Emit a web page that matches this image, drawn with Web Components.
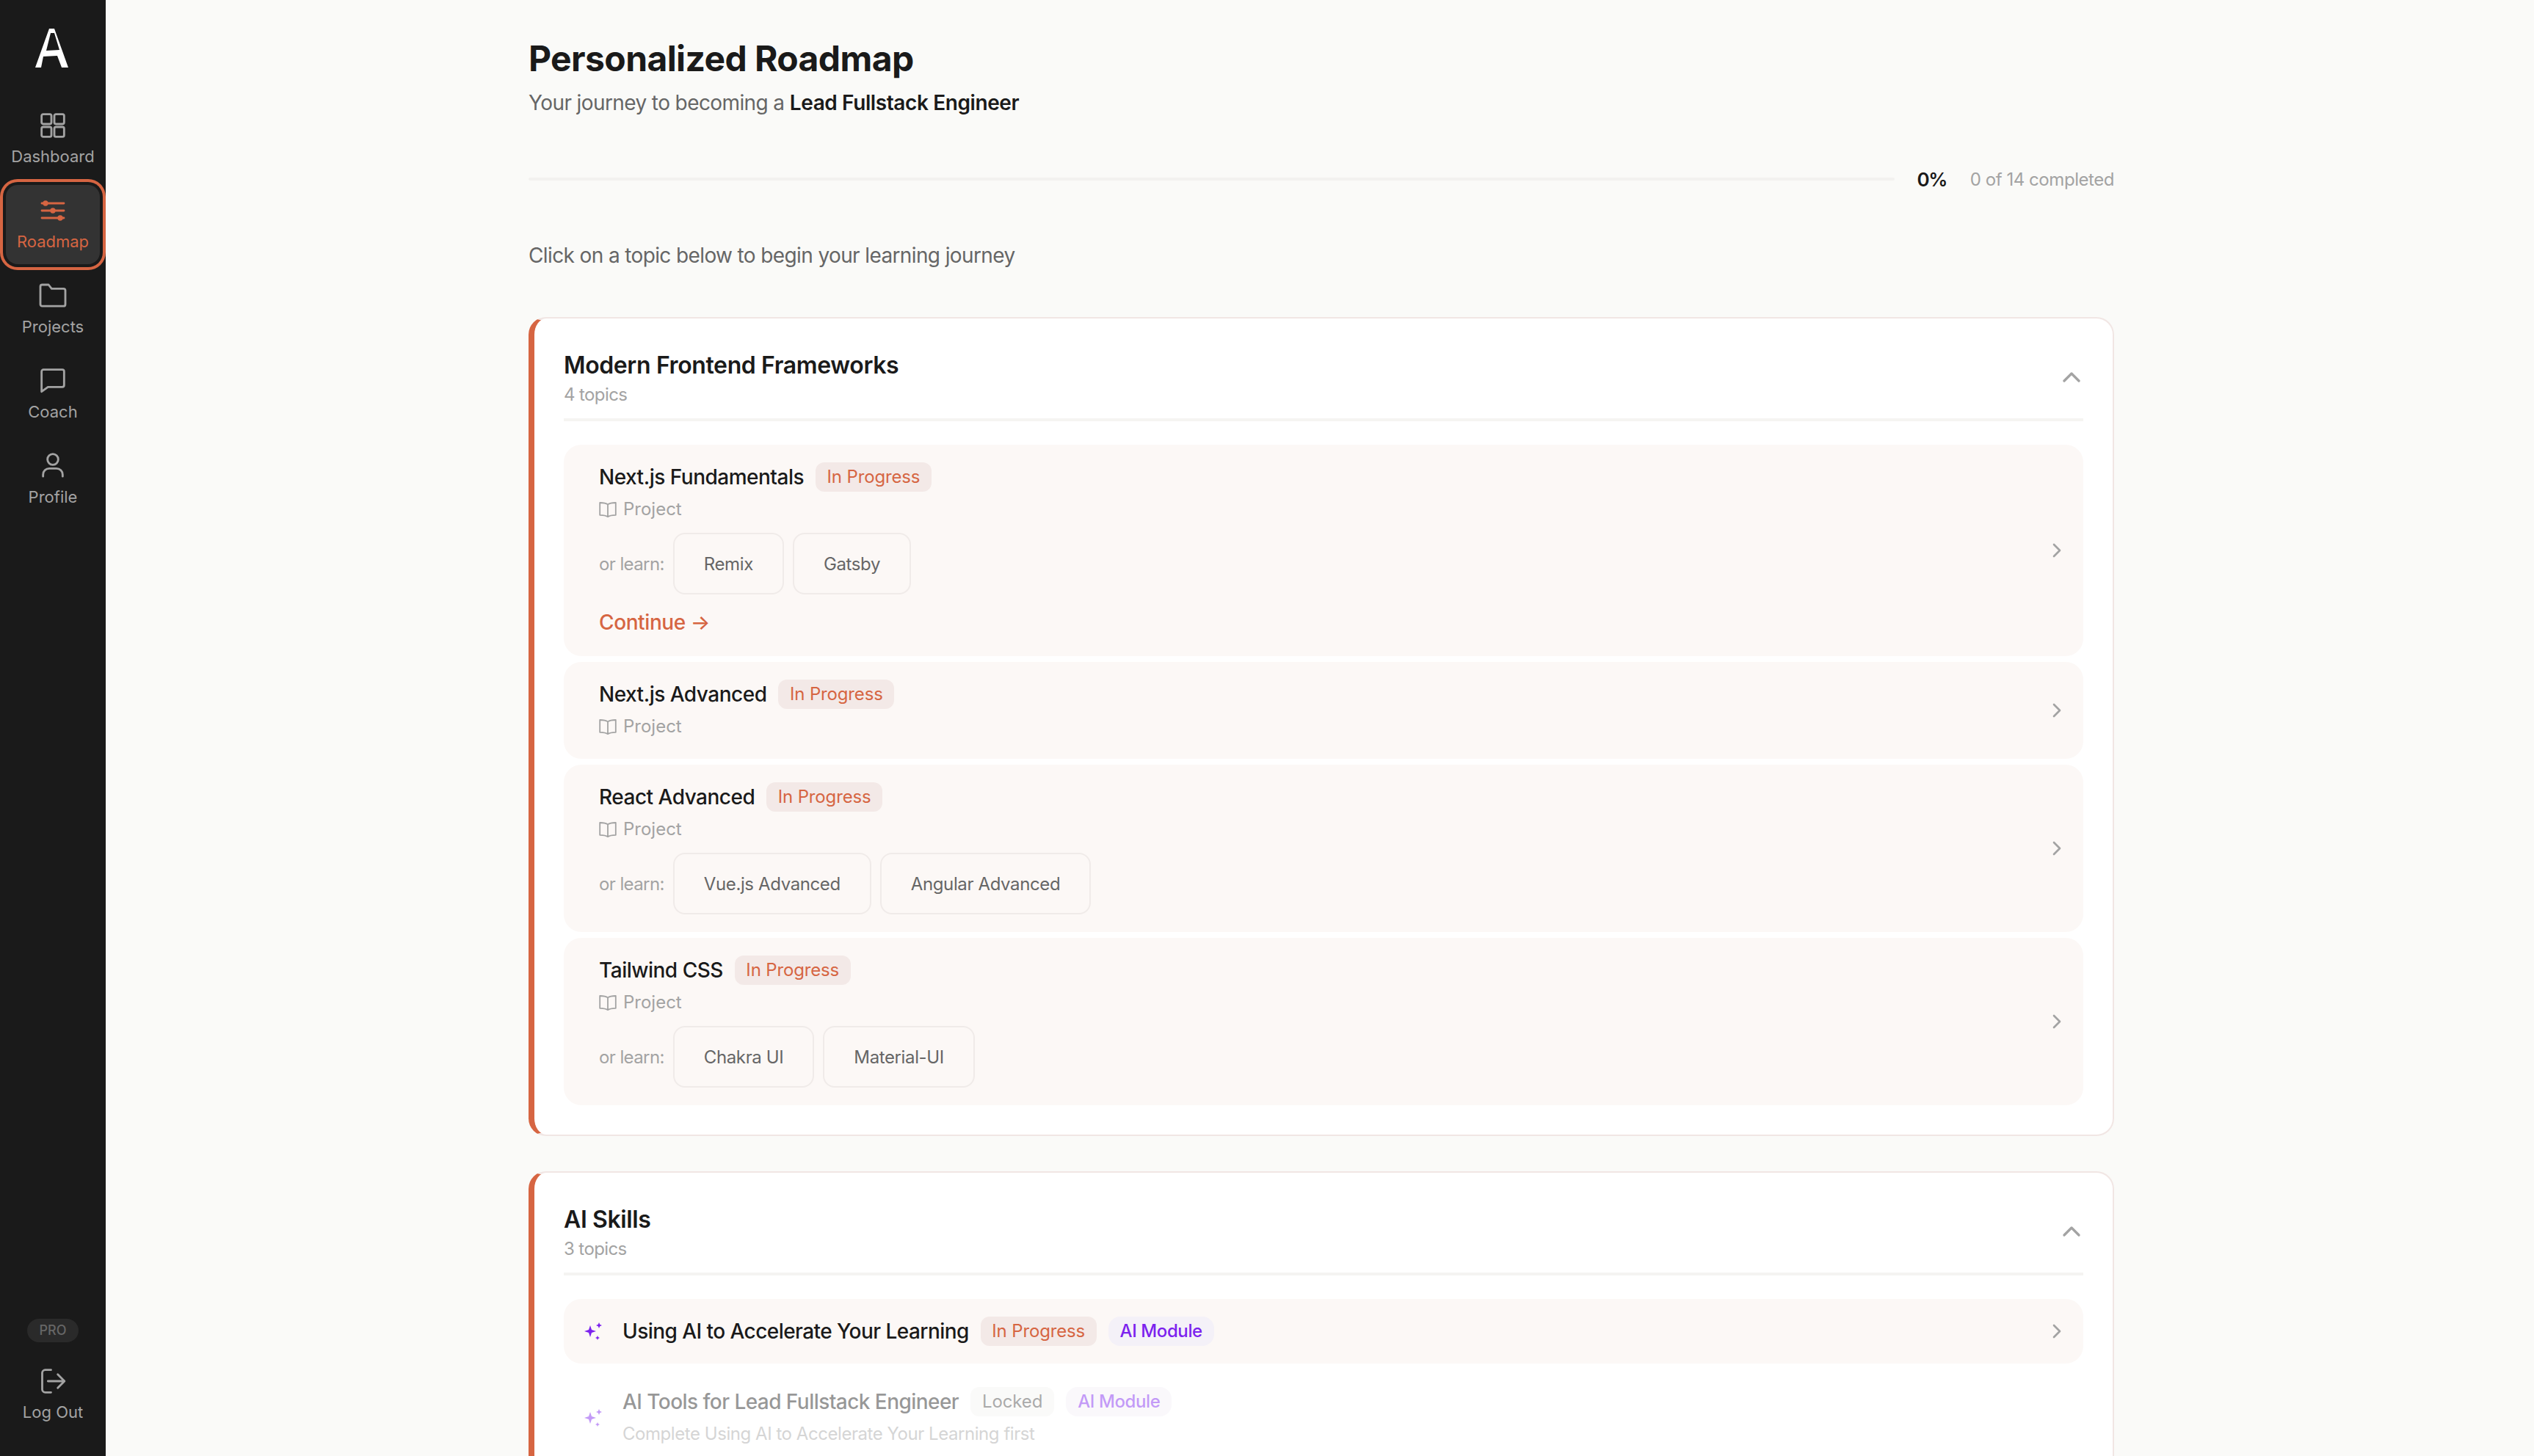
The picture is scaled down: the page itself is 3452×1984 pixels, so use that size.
<!DOCTYPE html>
<html lang="en"><head><meta charset="utf-8"><title>Personalized Roadmap</title>
<style>
html,body{margin:0;height:100%;overflow:hidden;background:#fafaf8}
body{font-family:Inter,"Liberation Sans",sans-serif;color:#1a1a1a}
</style></head><body>
<app-shell>
  <side-bar slot="side"></side-bar>
  <roadmap-page></roadmap-page>
</app-shell>
<script>
const I={
 dash:'<rect x="2.800" y="2.800" width="8" height="8" rx="1.300"/><rect x="13.200" y="2.800" width="8" height="8" rx="1.300"/><rect x="2.800" y="13.200" width="8" height="8" rx="1.300"/><rect x="13.200" y="13.200" width="8" height="8" rx="1.300"/>',
 road:'<path d="M3 6h18M3 12h18M3 18h18"/><circle cx="6" cy="6" r="2.200" fill="currentColor" stroke="none"/><circle cx="12" cy="12" r="2.200" fill="currentColor" stroke="none"/><circle cx="18" cy="18" r="2.200" fill="currentColor" stroke="none"/>',
 folder:'<path d="M1.800 4.500A1.500 1.500 0 0 1 3.300 3H8.500L11 6.200H20.700A1.500 1.500 0 0 1 22.200 7.700V19A1.500 1.500 0 0 1 20.700 20.500H3.300A1.500 1.500 0 0 1 1.800 19Z"/>',
 chat:'<path d="M2.800 4.300A1.500 1.500 0 0 1 4.300 2.800h15.400a1.500 1.500 0 0 1 1.500 1.500v11.200a1.500 1.500 0 0 1-1.500 1.500H8l-5.200 3.800z"/>',
 user:'<circle cx="12" cy="6.600" r="4.400"/><path d="M4 20.500v-1.500A5 5 0 0 1 9 14h6a5 5 0 0 1 5 5v1.500"/>',
 logout:'<path d="M10.500 2.800H5.800A2.500 2.500 0 0 0 3.300 5.300v13.400a2.500 2.500 0 0 0 2.500 2.500h4.700M8 12h13.500M16 6.500l5.500 5.500-5.500 5.500"/>',
 book:'<path d="M12 6.500C10 5 7 4.500 3 4.500v14c4 0 7 .5 9 2 2-1.500 5-2 9-2v-14c-4 0-7 .5-9 2zM12 6.500v14"/>'
};
function svg(n,s,w,vb){return `<svg width="${s}" height="${s}" viewBox="${vb||'0 0 24 24'}" fill="none" stroke="currentColor" stroke-width="${w}" stroke-linecap="round" stroke-linejoin="round" style="flex:none">${I[n]}</svg>`}
function def(name,html){customElements.define(name,class extends HTMLElement{connectedCallback(){if(this.shadowRoot)return;const r=this.attachShadow({mode:'open'});r.innerHTML=typeof html==='function'?html(this):html;}})}

def('app-shell',`<style>:host{display:flex;height:1984px;width:3452px;overflow:hidden;background:#fafaf8}
.m{flex:1;min-width:0;overflow:hidden}</style><slot name="side"></slot><div class="m"><slot></slot></div>`);

def('nav-item',h=>`<style>:host{display:block;width:128px;height:108px;margin:0 8px;box-sizing:border-box;border-radius:16px;color:#a3a3a3;text-align:center;padding-top:15px}
:host([active]){background:#333;color:#d66542;box-shadow:0 0 0 4px #1a1a1a,0 0 0 8px #d66542}
svg{display:block;margin:0 auto}.l{font:400 22px/32px Inter,sans-serif;margin-top:6px;white-space:nowrap}</style>${svg(h.getAttribute('icon'),40,1.7)}<div class="l"><slot></slot></div>`);

def('side-bar',`<style>:host{display:flex;flex-direction:column;flex:none;width:144px;height:1984px;background:#1a1a1a;align-items:stretch;box-sizing:border-box}
.logo{height:136px;display:flex;justify-content:center;padding:39px 4px 0 0;box-sizing:border-box}
nav{display:flex;flex-direction:column;gap:8px}
.sp{flex:1}
.pro{align-self:center;font:500 18px/32px Inter,sans-serif;color:#666;background:#2a2a2a;border-radius:16px;width:70px;text-align:center;margin-bottom:33px}
.foot{padding-bottom:44px}
.foot nav-item{height:auto;padding-top:0}
</style>
<div class="logo"><svg width="45" height="53" viewBox="0 0 45 53"><path fill="#fff" fill-rule="evenodd" d="M19 0h7l19 53h-9l-6-16-19 1-3 15H0zM21 6 15 30l18-1-7-23z"/></svg></div>
<nav><nav-item icon="dash">Dashboard</nav-item><nav-item icon="road" active>Roadmap</nav-item><nav-item icon="folder">Projects</nav-item><nav-item icon="chat">Coach</nav-item><nav-item icon="user">Profile</nav-item></nav>
<div class="sp"></div><div class="pro">PRO</div><div class="foot"><nav-item icon="logout">Log Out</nav-item></div>`);

def('status-badge',`<style>:host{display:inline-block;font:400 24px/40px Inter,sans-serif;height:40px;padding:0 15.5px;border-radius:12px;background:#f3e9e7;color:#d66542;white-space:nowrap;letter-spacing:-.15px;flex:none}
:host([kind=ai]){background:#f4f1f8;color:#7c22ee;border-radius:16px;font-weight:500;padding:0 16px;letter-spacing:-.4px}
:host([kind=locked]){background:#f5f4f2;color:#444;padding:0 16px}</style><slot></slot>`);

def('alt-chip',`<style>:host{display:inline-flex;align-items:center;height:84px;box-sizing:border-box;padding:0 40px;border:2px solid #f0ebe9;border-radius:16px;font:400 24px Inter,sans-serif;color:#666;letter-spacing:-.38px;white-space:nowrap}</style><slot></slot>`);

const chev=`<svg class="chev" width="32" height="32" viewBox="0 0 24 24" fill="none" stroke="#a3a3a3" stroke-width="2" stroke-linecap="round" stroke-linejoin="round"><path d="m9 18 6-6-6-6"/></svg>`;

def('topic-item',h=>{
 const alts=(h.getAttribute('alts')||'').split('|').filter(Boolean);
 return `<style>:host{display:flex;align-items:center;border-radius:24px;background:#fcf8f6;padding:24px 20px 24px 48px;margin-bottom:8px}
.b{flex:1;min-width:0}.t{display:flex;align-items:center;gap:16px;height:40px;font:500 28px/40px Inter,sans-serif;letter-spacing:-.5px}
.p{display:flex;align-items:center;gap:9px;height:40px;margin-top:4px;color:#a3a3a3;font:400 24px/40px Inter,sans-serif}
.a{display:flex;align-items:center;gap:12px;margin-top:12px;color:#a3a3a3;font:400 24px Inter,sans-serif;letter-spacing:-.6px}
.c{margin-top:16px;height:44px;font:500 28px/44px Inter,sans-serif;color:#d66542;letter-spacing:-.4px}
.chev{flex:none;display:block}</style>
<div class="b"><div class="t"><span><slot></slot></span><status-badge>In Progress</status-badge></div>
<div class="p">${svg('book',24,1.5,'2 2 20 20')}<span>Project</span></div>
${alts.length?`<div class="a"><span>or learn:</span>${alts.map(a=>`<alt-chip>${a}</alt-chip>`).join('')}</div>`:''}
${h.hasAttribute('cont')?'<div class="c">Continue →</div>':''}</div>${chev}`});

const spark=c=>`<svg width="32" height="32" viewBox="0 0 32 32" fill="${c}" style="flex:none;display:block"><path d="M12 8l2 6 6 2-6 2-2 6-2-6-6-2 6-2z"/><path d="M24 4l1.200 2.800L28 8l-2.800 1.200L24 12l-1.200-2.800L20 8l2.800-1.200z"/><path d="M22 22l.9 2.100 2.100.9-2.100.9-.9 2.100-.9-2.100-2.100-.9 2.100-.9z"/></svg>`;

def('ai-item',h=>{const lock=h.hasAttribute('locked');return `<style>:host{display:flex;align-items:center;border-radius:24px;padding:24px 20px 24px 24px;margin-bottom:8px;${lock?'':'background:#fcf8f6;'}}
.b{flex:1;min-width:0;margin-left:24px}.t{display:flex;align-items:center;gap:16px;height:40px;font:500 28px/40px Inter,sans-serif;letter-spacing:-.55px}
.d{margin-top:4px;height:40px;font:400 24px/40px Inter,sans-serif;color:#a3a3a3;letter-spacing:-.45px}
.w{display:flex;flex:1;align-items:center;${lock?'opacity:.45':''}}.chev{flex:none;display:block}</style>
<div class="w">${spark('#7c22ee')}<div class="b"><div class="t"><span><slot></slot></span>${lock?'<status-badge kind="locked">Locked</status-badge>':'<status-badge>In Progress</status-badge>'}<status-badge kind="ai">AI Module</status-badge></div>${lock?`<div class="d">${h.getAttribute('desc')}</div>`:''}</div></div>${lock?'':chev}`});

def('skill-card',h=>`<style>:host{display:block;box-sizing:border-box;background:#fff;border:2px solid #f1e6e4;border-left:8px solid #d66542;border-radius:24px;padding:40px 40px 40px;margin-bottom:48px}
.h{display:flex;justify-content:space-between;padding-bottom:16px;border-bottom:4px solid #f5f4f2;margin-bottom:32px}
.n{font:600 32px/48px Inter,sans-serif;letter-spacing:-.38px}.s{font:400 24px/32px Inter,sans-serif;color:#a3a3a3;letter-spacing:-.6px}
svg{display:block;margin:20px -4px 0 0}
</style><div class="h"><div><div class="n">${h.getAttribute('name')}</div><div class="s">${h.getAttribute('sub')}</div></div><svg width="40" height="40" viewBox="0 0 24 24" fill="none" stroke="#a3a3a3" stroke-width="2" stroke-linecap="round" stroke-linejoin="round"><path d="m18 15-6-6-6 6"/></svg></div><slot></slot>`);

def('progress-row',`<style>:host{display:flex;align-items:center;height:40px;margin:64px 0}
.b{flex:1;height:4px;background:#f2f1ef;border-radius:2px}.p{font:600 26px Inter,sans-serif;margin:0 32px 0 31px;letter-spacing:-1.5px}.c{font:400 24px Inter,sans-serif;color:#a3a3a3;letter-spacing:-.45px}</style><div class="b"></div><div class="p">0%</div><div class="c">0 of 14 completed</div>`);

def('roadmap-page',`<style>:host{display:block;padding:48px 572px 0 576px}
h1{margin:0;font:700 48px/64px Inter,sans-serif;letter-spacing:-.6px}
.s{margin-top:8px;font:400 28px/40px Inter,sans-serif;color:#666;letter-spacing:-.6px}.s b{font-weight:600;color:#1a1a1a;letter-spacing:-.4px}
.k{font:400 28px/40px Inter,sans-serif;color:#666;letter-spacing:-.62px;margin-bottom:64px}
</style>
<h1>Personalized Roadmap</h1><div class="s">Your journey to becoming a <b>Lead Fullstack Engineer</b></div>
<progress-row></progress-row>
<div class="k">Click on a topic below to begin your learning journey</div>
<skill-card name="Modern Frontend Frameworks" sub="4 topics">
<topic-item alts="Remix|Gatsby" cont>Next.js Fundamentals</topic-item>
<topic-item>Next.js Advanced</topic-item>
<topic-item alts="Vue.js Advanced|Angular Advanced">React Advanced</topic-item>
<topic-item alts="Chakra UI|Material-UI" style="margin-bottom:0">Tailwind CSS</topic-item>
</skill-card>
<skill-card name="AI Skills" sub="3 topics">
<ai-item>Using AI to Accelerate Your Learning</ai-item>
<ai-item locked desc="Complete Using AI to Accelerate Your Learning first">AI Tools for Lead Fullstack Engineer</ai-item>
</skill-card>`);
</script></body></html>
